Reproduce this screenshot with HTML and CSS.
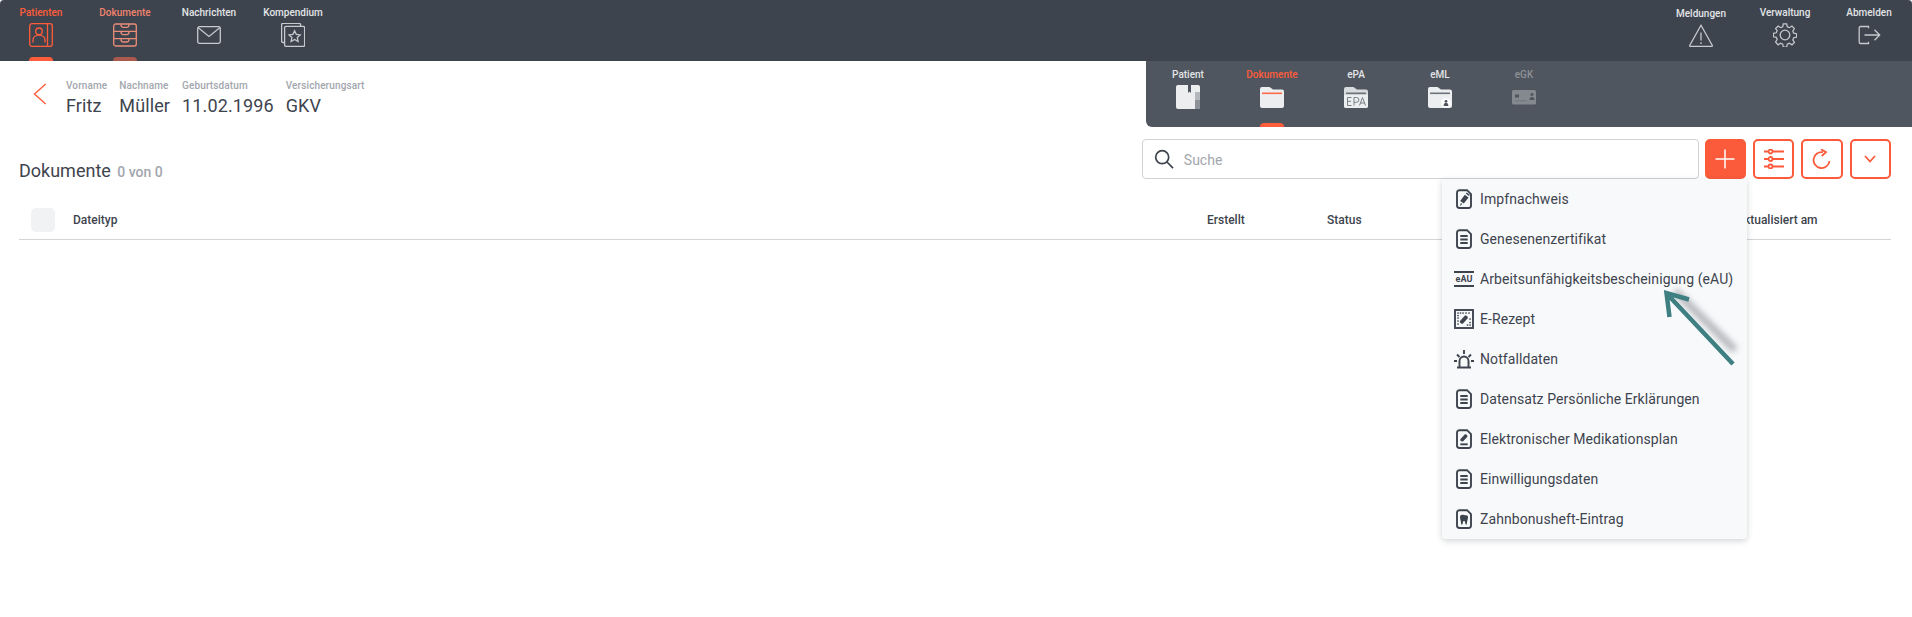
FILE: index.html
```html
<!DOCTYPE html>
<html lang="de">
<head>
<meta charset="utf-8">
<title>Dokumente</title>
<link rel="stylesheet" href="styles.css">
</head>
<body>
<header class="topbar">
  <nav class="nav">
    <a class="nav-item active"><span class="nav-label">Patienten</span>
      <svg class="nav-icon" viewBox="0 0 24 24"><rect x=".7" y=".7" width="22.600" height="22.600" rx="2.200"/><path d="M18.500.7v22.600"/><circle cx="10" cy="8.300" r="3.300"/><path d="M4 19.500v-2.300c0-3 2.500-5 6-5s6 2 6 5v2.300"/></svg>
      <i class="nav-mark"></i></a>
    <a class="nav-item dim"><span class="nav-label">Dokumente</span>
      <svg class="nav-icon" viewBox="0 0 24 24"><rect x=".7" y="1" width="22.600" height="22" rx="2"/><path d="M.7 8.300h22.600M.7 15.700h22.600M8 1v.8c0 1.500 1 2.500 2.300 2.500h3.400c1.300 0 2.300-1 2.300-2.500V1M8 8.300v.8c0 1.500 1 2.500 2.300 2.500h3.400c1.300 0 2.300-1 2.300-2.500v-.8M8 15.700v.8c0 1.500 1 2.500 2.300 2.500h3.400c1.300 0 2.300-1 2.300-2.500v-.8"/></svg>
      <i class="nav-mark"></i></a>
    <a class="nav-item"><span class="nav-label">Nachrichten</span>
      <svg class="nav-icon" viewBox="0 0 24 24"><rect x=".7" y="3.700" width="22.600" height="16.600" rx="1.800"/><path d="M1 4.500l11 9 11-9"/></svg></a>
    <a class="nav-item"><span class="nav-label">Kompendium</span>
      <svg class="nav-icon" viewBox="0 0 24 24"><path d="M3.600 19.500H2c-.8 0-1.400-.6-1.400-1.400V1.800C.6 1 1.200.4 2 .4h16.200c.8 0 1.400.6 1.400 1.400v1.500"/><rect x="3.600" y="3.300" width="20" height="20.200" rx="1.500"/><path d="M13.600 7.800l1.700 3.600 3.900.5-2.900 2.700.8 3.900-3.500-2-3.500 2 .8-3.900-2.900-2.700 3.900-.5z"/></svg></a>
  </nav>
  <nav class="nav">
    <a class="nav-item low"><span class="nav-label">Meldungen</span>
      <svg class="nav-icon" viewBox="0 0 24 24"><path d="M12 1.300L.8 21.300c-.3.600 0 1.100.7 1.100h21c.7 0 1-.5.700-1.100z"/><path d="M12 8.500v8M12 18.300v1.800"/></svg></a>
    <a class="nav-item"><span class="nav-label">Verwaltung</span>
      <svg class="nav-icon" viewBox="0 0 24 24"><circle cx="12" cy="12" r="4.800"/><path d="M10.200.7h3.600l.6 3 2.300 1 2.600-1.700 2.600 2.600-1.700 2.600 1 2.300 3 .6v3.600l-3 .6-1 2.300 1.700 2.600-2.600 2.600-2.600-1.700-2.300 1-.6 3h-3.600l-.6-3-2.300-1-2.600 1.700L2.100 19.800l1.700-2.600-1-2.300-3-.6v-3.600l3-.6 1-2.300L2.100 5.600l2.600-2.600 2.600 1.700 2.300-1z" transform="translate(.6 .2) scale(.95)"/></svg></a>
    <a class="nav-item"><span class="nav-label">Abmelden</span>
      <svg class="nav-icon" viewBox="0 0 24 24"><path d="M11.500 5.200V3.500H3.500c-.8 0-1.300.5-1.300 1.300v14.400c0 .8.500 1.300 1.300 1.300h8v-1.700"/><path d="M7.500 12h15M17.500 6.800l5.200 5.200-5.200 5.200"/></svg></a>
  </nav>
</header>

<section class="context">
  <div class="patient">
    <svg class="back" viewBox="0 0 14 22"><path d="M12.700 1L1.500 11l11.200 10"/></svg>
    <dl class="field"><dt>Vorname</dt><dd>Fritz</dd></dl>
    <dl class="field"><dt>Nachname</dt><dd>Müller</dd></dl>
    <dl class="field"><dt>Geburtsdatum</dt><dd>11.02.1996</dd></dl>
    <dl class="field"><dt>Versicherungsart</dt><dd>GKV</dd></dl>
  </div>
  <nav class="tabs">
    <a class="tab"><span class="tab-label">Patient</span>
      <svg class="tab-icon" viewBox="0 0 24 24"><path d="M2 0h10v8l1.500-1.500L15 8V0h7a2 2 0 0 1 2 2v20a2 2 0 0 1-2 2H2a2 2 0 0 1-2-2V2a2 2 0 0 1 2-2z" fill="#eceef0"/><path d="M19 7h5v8h-5z" fill="#b4b8bd"/><path d="M19 15h5v7a2 2 0 0 1-2 2h-3z" fill="#8d9299"/></svg></a>
    <a class="tab active"><span class="tab-label">Dokumente</span>
      <svg class="tab-icon" viewBox="0 0 24 24"><path d="M2 2h7.500L13 4.500h9a2 2 0 0 1 2 2V21a2 2 0 0 1-2 2H2a2 2 0 0 1-2-2V4a2 2 0 0 1 2-2z" fill="#eceef0"/><rect x="2" y="7.500" width="20" height="1.600" fill="#ff6a4b"/></svg>
      <i class="tab-mark"></i></a>
    <a class="tab"><span class="tab-label">ePA</span>
      <svg class="tab-icon" viewBox="0 0 24 24"><path d="M2 2h7.500L13 4.500h9a2 2 0 0 1 2 2V21a2 2 0 0 1-2 2H2a2 2 0 0 1-2-2V4a2 2 0 0 1 2-2z" fill="#d9dbde"/><path d="M0 10h24v11a2 2 0 0 1-2 2H2a2 2 0 0 1-2-2z" fill="#eceef0"/><rect x="2" y="7.500" width="20" height="1.600" fill="#6e7379"/><path d="M7.500 12.500h-4v8h4M3.500 16.300H7M10 20.500v-8h2.500a2.400 2.400 0 0 1 0 4.800H10M15.500 20.500l3-8 3 8M16.500 18h4" fill="none" stroke="#7a7f86" stroke-width="1"/></svg></a>
    <a class="tab"><span class="tab-label">eML</span>
      <svg class="tab-icon" viewBox="0 0 24 24"><path d="M2 2h7.500L13 4.500h9a2 2 0 0 1 2 2V21a2 2 0 0 1-2 2H2a2 2 0 0 1-2-2V4a2 2 0 0 1 2-2z" fill="#eceef0"/><rect x="2" y="7.500" width="20" height="1.600" fill="#6e7379"/><circle cx="18" cy="18" r="4.800" fill="#fff"/><circle cx="18" cy="16.300" r="1.400" fill="#50565f"/><path d="M15.600 21c0-2.300 1-3.300 2.400-3.300s2.400 1 2.400 3.300z" fill="#50565f"/></svg></a>
    <a class="tab off"><span class="tab-label">eGK</span>
      <svg class="tab-icon" viewBox="0 0 24 24"><rect y="5" width="24" height="14.500" rx="1.500" fill="#84888f"/><rect x="3" y="9.500" width="4" height="3" fill="#50565f"/><circle cx="20" cy="9.500" r="1.500" fill="#50565f"/><path d="M17.500 15c0-2 1-3 2.500-3s2.500 1 2.500 3z" fill="#50565f"/><rect x="3" y="15.500" width="12" height=".8" fill="#6c7077"/></svg></a>
  </nav>
</section>

<main class="docs">
  <div class="docs-head">
    <h1 class="title">Dokumente <small>0 von 0</small></h1>
    <div class="toolbar">
      <label class="search">
        <svg class="search-icon" viewBox="0 0 20 20"><circle cx="8.200" cy="8.200" r="6.500"/><path d="M13 13l6 6.200"/></svg>
        <input class="search-input" type="text" placeholder="Suche">
      </label>
      <button class="btn primary"><svg viewBox="0 0 20 20"><path d="M10 .5v19M.5 10h19"/></svg></button>
      <button class="btn"><svg viewBox="0 0 20 20"><path d="M0 2.500h4.500M8.500 2.500H20M0 10h4.500M8.500 10H20M0 17.500h4.500M8.500 17.500H20"/><circle cx="6.500" cy="2.500" r="2"/><circle cx="6.500" cy="10" r="2"/><circle cx="6.500" cy="17.500" r="2"/></svg></button>
      <button class="btn"><svg viewBox="0 0 20 20"><path d="M11 3.200A8 8 0 1 0 17.500 12"/><path d="M9 .2l5 3-4.300 3.800"/></svg></button>
      <button class="btn"><svg class="chev" viewBox="0 0 12 8"><path d="M1 1l5 5.500L11 1"/></svg></button>
      <ul class="menu">
        <li class="menu-item"><svg class="mi" viewBox="0 0 16 20"><path d="M3.500 1.200H11l4 4v11.300a2.500 2.500 0 0 1-2.500 2.500h-9A2.500 2.500 0 0 1 1 16.500V3.700a2.500 2.500 0 0 1 2.500-2.500z"/><path class="s" d="M8.800 5.800l3.800 2.800-4.800 6-3.600-2.600zM5 14l1.200 1L3.600 17.200z"/><path class="t" d="M10.200 4l3.200 2.400"/></svg><span>Impfnachweis</span></li>
        <li class="menu-item"><svg class="mi" viewBox="0 0 16 20"><path d="M3.500 1.200H11l4 4v11.300a2.500 2.500 0 0 1-2.500 2.500h-9A2.500 2.500 0 0 1 1 16.500V3.700a2.500 2.500 0 0 1 2.500-2.500z"/><path d="M4.300 7h7.400M4.300 10.500h7.400M4.300 14h7.400"/></svg><span>Genesenenzertifikat</span></li>
        <li class="menu-item"><svg class="mi wide" viewBox="0 0 20 16"><path d="M0 1h20M0 15h20"/><text x="10" y="11.200" class="eau">eAU</text></svg><span>Arbeitsunfähigkeitsbescheinigung (eAU)</span></li>
        <li class="menu-item"><svg class="mi wide" viewBox="0 0 20 20"><rect x="1" y="1" width="18" height="18"/><path class="s" d="M6 12l4.500-5c1.200-1.300 4.300 1 3 2.500l-4.500 5c-1.300 1.200-4-1-3-2.500z"/><path class="dots" d="M4 4h.1M6.500 4h.1M9 4h.1M12 4h.1M15 4h.1M4 6.500h.1M4 9h.1M4 12h.1M4 15h.1M16 16h.1M13.500 16h.1M16 13.500h.1M16 10h.1"/></svg><span>E-Rezept</span></li>
        <li class="menu-item"><svg class="mi wide" viewBox="0 0 20 20"><path d="M5.500 18.500V12a4.500 4.500 0 0 1 9 0v6.500M3 18.500h14M0 12h3M17 12h3M3 5.500L5.500 8M17 5.500L14.500 8M10 1v4"/></svg><span>Notfalldaten</span></li>
        <li class="menu-item"><svg class="mi" viewBox="0 0 16 20"><path d="M3.500 1.200H11l4 4v11.300a2.500 2.500 0 0 1-2.500 2.500h-9A2.500 2.500 0 0 1 1 16.500V3.700a2.500 2.500 0 0 1 2.500-2.500z"/><path d="M4.300 7h7.400M4.300 10.500h7.400M4.300 14h7.400"/></svg><span>Datensatz Persönliche Erklärungen</span></li>
        <li class="menu-item"><svg class="mi" viewBox="0 0 16 20"><path d="M3.500 1.200H11l4 4v11.300a2.500 2.500 0 0 1-2.500 2.500h-9A2.500 2.500 0 0 1 1 16.500V3.700a2.500 2.500 0 0 1 2.500-2.500z"/><path class="s" d="M4.500 10l4-4.300c1.300-1.200 3.800 1 2.700 2.300l-4 4.200c-1.400 1-3.800-.8-2.700-2.200z"/><path d="M4.300 15.300h7.400"/></svg><span>Elektronischer Medikationsplan</span></li>
        <li class="menu-item"><svg class="mi" viewBox="0 0 16 20"><path d="M3.500 1.200H11l4 4v11.300a2.500 2.500 0 0 1-2.500 2.500h-9A2.500 2.500 0 0 1 1 16.500V3.700a2.500 2.500 0 0 1 2.500-2.500z"/><path d="M4.300 7h7.400M4.300 10.500h7.400M4.300 14h7.400"/></svg><span>Einwilligungsdaten</span></li>
        <li class="menu-item"><svg class="mi" viewBox="0 0 16 20"><path d="M3.500 1.200H11l4 4v11.300a2.500 2.500 0 0 1-2.500 2.500h-9A2.500 2.500 0 0 1 1 16.500V3.700a2.500 2.500 0 0 1 2.500-2.500z"/><path class="s" d="M4 8c0-2 1.800-2.500 4-2s4 0 4 2c0 2.500-1 3.500-1.200 7-.1 1-1.100 1-1.300 0L8.600 12H7.400l-.9 3c-.2 1-1.200 1-1.300 0C5 11.500 4 10.500 4 8z"/></svg><span>Zahnbonusheft-Eintrag</span></li>
      </ul>
    </div>
  </div>
  <div class="thead">
    <span class="check"></span>
    <span class="th">Dateityp</span>
    <span class="th">Erstellt</span>
    <span class="th">Status</span>
    <span class="th">Aktualisiert am</span>
  </div>
</main>

<svg class="callout" viewBox="0 0 90 90">
  <path class="callout-shadow" d="M15 6L75 65"/>
  <path class="callout-arrow" d="M73 79L8 10M9.500 32L6.500 8 29 14.500"/>
</svg>
</body>
</html>
```

FILE: styles.css
```css
* { box-sizing: border-box; }
html, body { margin: 0; padding: 0; }
body {
  position: relative;
  height: 617px;
  overflow: hidden;
  background: #fff;
  color: #3e444e;
  font-family: Roboto, "Liberation Sans", sans-serif;
}

.topbar {
  display: flex;
  justify-content: space-between;
  height: 61px;
  padding-right: 2px;
  background: #3e444e;
  border-radius: 4px 4px 0 0;
}
.nav { display: flex; gap: 2px; }
.nav-item {
  position: relative;
  display: flex;
  flex-direction: column;
  align-items: center;
  width: 82px;
  padding-top: 6px;
  color: #e2e4e7;
}
.nav-label { font-size: 10px; line-height: 13px; font-weight: 500; white-space: nowrap; }
.nav-icon {
  width: 24px;
  height: 24px;
  margin-top: 4px;
  fill: none;
  stroke: #c6c9cd;
  stroke-width: 1.300;
}
.nav-item.low { padding-top: 7px; }
.nav-item.active { color: #ff5c3b; }
.nav-item.active .nav-icon { stroke: #ff5c3b; }
.nav-item.dim { color: #f0836c; }
.nav-item.dim .nav-icon { stroke: #ea8d78; }
.nav-mark {
  position: absolute;
  left: 29px;
  bottom: 0;
  width: 24px;
  height: 4px;
  border-radius: 4px 4px 0 0;
  background: #ff5c3b;
}
.nav-item.dim .nav-mark { background: #a9594e; }

.context {
  display: flex;
  justify-content: space-between;
  height: 66px;
}
.patient {
  display: flex;
  align-items: flex-start;
  gap: 12px;
  padding: 18px 0 0 33px;
}
.back {
  width: 14px;
  height: 22px;
  margin: 4px 7px 0 0;
  fill: none;
  stroke: #ff5c3b;
  stroke-width: 1.400;
}
.field { margin: 0; }
.field dt { font-size: 10px; line-height: 13px; font-weight: 500; letter-spacing: .12px; color: #a2a6ad; white-space: nowrap; }
.field dd { margin: 3px 0 0; font-size: 18px; line-height: 22px; letter-spacing: .12px; color: #3e444e; white-space: nowrap; }

.tabs {
  display: flex;
  gap: 2px;
  width: 766px;
  padding-left: 1px;
  background: #50565f;
  border-radius: 0 0 0 6px;
}
.tab {
  position: relative;
  display: flex;
  flex-direction: column;
  align-items: center;
  width: 82px;
  padding-top: 7px;
  color: #e2e4e7;
}
.tab-label { font-size: 10px; line-height: 13px; font-weight: 500; }
.tab-icon { width: 24px; height: 24px; margin-top: 4px; }
.tab.active { color: #ff5c3b; }
.tab.off { color: #8d9198; }
.tab-mark {
  position: absolute;
  left: 29px;
  bottom: 0;
  width: 24px;
  height: 4px;
  border-radius: 4px 4px 0 0;
  background: #ff5c3b;
}

.docs { padding: 12px 21px 0 19px; }
.docs-head { display: flex; justify-content: space-between; height: 40px; }
.title {
  margin: 21px 0 0;
  font-size: 18px;
  line-height: 22px;
  font-weight: 400;
  color: #3e444e;
}
.title small { margin-left: 2px; font-size: 14px; font-weight: 500; color: #a2a6ad; }

.toolbar { position: relative; display: flex; gap: 7px; }
.search {
  display: flex;
  align-items: center;
  width: 557px;
  height: 40px;
  margin-right: -1px;
  padding-left: 11px;
  background: #fff;
  border: 1px solid #d0d2d6;
  border-radius: 4px;
}
.search-icon {
  width: 20px;
  height: 20px;
  fill: none;
  stroke: #3e444e;
  stroke-width: 1.700;
}
.search-input {
  flex: 1;
  margin-left: 10px;
  padding: 2px 0 0;
  border: 0;
  outline: 0;
  background: transparent;
  font: 400 14px Roboto, sans-serif;
}
.search-input::placeholder { color: #a2a6ad; opacity: 1; }
.btn {
  display: flex;
  align-items: center;
  justify-content: center;
  width: 41.300px;
  height: 40px;
  padding: 0;
  background: #fff;
  border: 2px solid #fb5b3a;
  border-radius: 5px;
}
.btn svg {
  width: 20px;
  height: 20px;
  fill: none;
  stroke: #fb5b3a;
  stroke-width: 1.800;
}
.btn.primary { background: #fb5b3a; }
.btn.primary svg { stroke: #fff; stroke-width: 1.500; }
.btn svg.chev { width: 12px; height: 8px; }

.menu {
  position: absolute;
  top: 40px;
  right: 144px;
  z-index: 2;
  width: 305px;
  margin: 0;
  padding: 0;
  list-style: none;
  background: #f8f9fb;
  border-radius: 0 0 4px 4px;
  box-shadow: 0 2px 6px rgba(40, 45, 55, .2);
}
.menu-item {
  display: flex;
  align-items: center;
  gap: 6px;
  height: 40px;
  padding-left: 12px;
  font-size: 14px;
  letter-spacing: .08px;
  color: #3e444e;
  white-space: nowrap;
}
.mi {
  flex: none;
  width: 16px;
  height: 20px;
  margin: 0 2px;
  fill: none;
  stroke: #3e444e;
  stroke-width: 1.900;
}
.mi.wide { width: 20px; margin: 0; }
.mi .s { fill: #3e444e; stroke: none; }
.mi .t { stroke-width: 1.500; }
.mi .dots { stroke-width: 1.700; stroke-linecap: round; }
.eau { font: 700 9px Roboto, sans-serif; text-anchor: middle; fill: #3e444e; stroke: none; }

.thead {
  display: grid;
  grid-template-columns: 24px 1152px 120px 409px auto;
  align-items: center;
  height: 61px;
  padding: 21px 0 0 12px;
  border-bottom: 1px solid #d3d4d7;
}
.check {
  width: 24px;
  height: 24px;
  background: #f1f2f4;
  border-radius: 5px;
}
.th { font-size: 12px; font-weight: 500; color: #3e444e; white-space: nowrap; }
.th:nth-child(2) { margin-left: 18px; }

.callout {
  position: absolute;
  left: 1660px;
  top: 285px;
  z-index: 3;
  width: 90px;
  height: 90px;
  overflow: visible;
}
.callout-shadow { fill: none; stroke: #8f9296; stroke-width: 7; opacity: .7; filter: blur(3px); }
.callout-arrow { fill: none; stroke: #3e7f82; stroke-width: 4.500; }
```
